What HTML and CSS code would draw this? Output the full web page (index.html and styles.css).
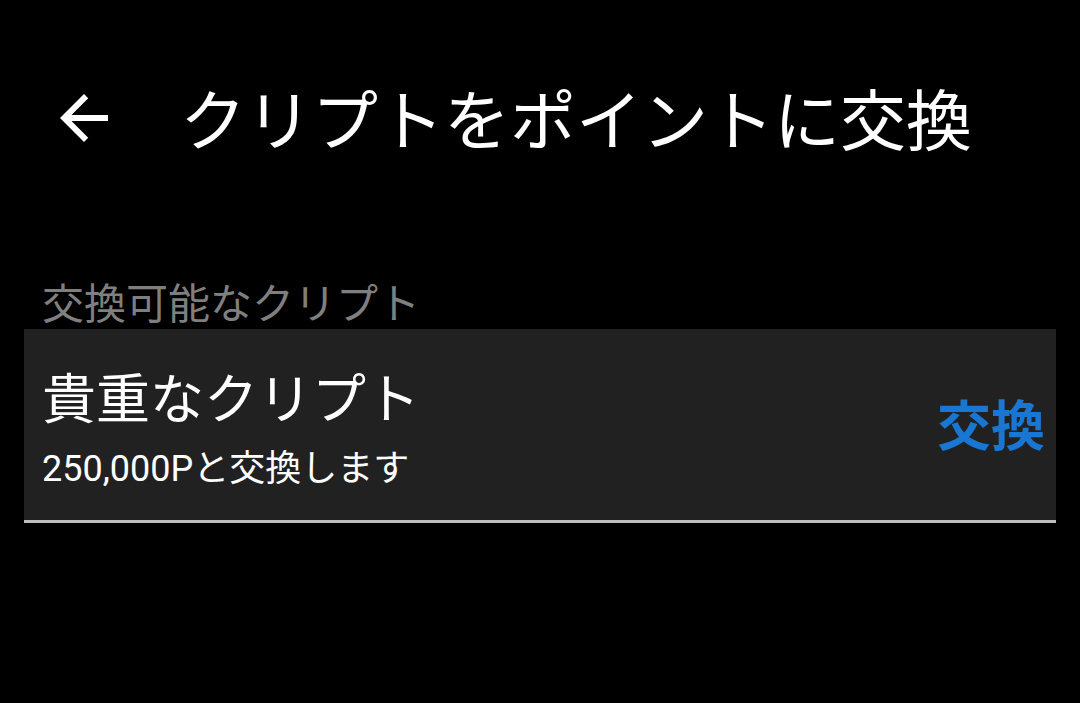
FILE: index.html
```html
<!DOCTYPE html>
<html lang="ja">
<head>
<meta charset="utf-8">
<link rel="stylesheet" href="styles.css">
</head>
<body>
<div class="app">
  <header class="topbar">
    <svg class="back" viewBox="0 0 24 24" width="72" height="72"><path fill="#fff" d="M20 11H7.83l5.59-5.59L12 4l-8 8 8 8 1.41-1.41L7.83 13H20v-2z"/></svg>
    <h1 class="title">クリプトをポイントに交換</h1>
  </header>
  <main class="content">
    <div class="section-label">交換可能なクリプト</div>
    <div class="card">
      <div class="card-text">
        <div class="card-title">貴重なクリプト</div>
        <div class="card-sub">250,000Pと交換します</div>
      </div>
      <div class="card-action">交換</div>
    </div>
  </main>
</div>
</body>
</html>
```
FILE: styles.css
```css
html, body {
  margin: 0;
  padding: 0;
  background: #000;
}
body {
  width: 1080px;
  height: 703px;
  overflow: hidden;
  font-family: "Noto Sans CJK JP", "Noto Sans", sans-serif;
  color: #fff;
}
.topbar {
  height: 232px;
  display: flex;
  align-items: center;
  padding-left: 48px;
  box-sizing: border-box;
}
.back {
  display: block;
  flex: none;
  margin-top: 4px;
}
.title {
  margin: 0 0 0 60px;
  font-size: 66px;
  font-weight: 400;
  line-height: 1;
  color: #fff;
}
.content {
  padding: 48px 24px 0 24px;
}
.section-label {
  font-size: 42px;
  line-height: 42px;
  color: #7f7f7f;
  padding-left: 18px;
  margin-bottom: 7px;
}
.card {
  background: #212121;
  border-bottom: 3px solid #bdbdbd;
  display: flex;
  align-items: center;
  justify-content: space-between;
  padding: 40px 11px 34px 18px;
}
.card-text {
  display: flex;
  flex-direction: column;
  gap: 30px;
}
.card-title {
  font-size: 54px;
  line-height: 54px;
}
.card-sub {
  font-family: Roboto, "Noto Sans CJK JP", sans-serif;
  font-size: 36px;
  line-height: 33px;
}
.card-action {
  font-size: 54px;
  line-height: 54px;
  font-weight: 700;
  color: #1976d2;
  margin-bottom: 10px;
}
```
